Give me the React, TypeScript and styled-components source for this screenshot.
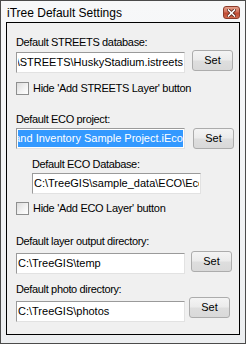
import React from "react";
import styled, { createGlobalStyle } from "styled-components";

const Global = createGlobalStyle`
  html, body { margin: 0; padding: 0; background: #ffffff; }
  body { font-family: "Liberation Sans", Arial, sans-serif; }
`;

const Window = styled.div`
  width: 246px;
  height: 344px;
  box-sizing: border-box;
  border: 1px solid #4b4b4b;
  padding: 0 5px 8px;
  background: linear-gradient(#f7f8f9, #eceef0);
  display: flex;
  flex-direction: column;
`;

const TitleBar = styled.div`
  height: 21px;
  box-sizing: border-box;
  padding: 5px 0 0 1px;
  display: flex;
  justify-content: space-between;
  align-items: flex-start;
`;

const Title = styled.div`
  font-size: 12px;
  line-height: 15px;
  color: #000;
`;

const CloseButton = styled.div`
  width: 17px;
  height: 13px;
  box-sizing: border-box;
  border: 1px solid #8c3b2a;
  border-radius: 3px;
  background: linear-gradient(#e4a08c 0%, #d2705a 45%, #c14a33 55%, #cf6a50 100%);
  display: flex;
  align-items: center;
  justify-content: center;
`;

const Client = styled.div`
  flex: 1;
  box-sizing: border-box;
  border: 1px solid #000;
  background: #f0f0f0;
  padding-left: 9px;
  display: flex;
  flex-direction: column;
`;

const Label = styled.div<{ $top: number; $indent?: number }>`
  margin-top: ${(p) => p.$top}px;
  margin-left: ${(p) => p.$indent ?? 0}px;
  font-size: 11px;
  line-height: 13px;
  letter-spacing: -0.35px;
  color: #000;
  white-space: nowrap;
`;

const FieldRow = styled.div<{ $top: number; $indent?: number }>`
  margin-top: ${(p) => p.$top}px;
  margin-left: ${(p) => p.$indent ?? 0}px;
  display: flex;
  align-items: flex-start;
`;

const TextBox = styled.div<{ $offset?: number }>`
  margin-top: ${(p) => p.$offset ?? 0}px;
  width: 169px;
  height: 21px;
  box-sizing: border-box;
  border: 1px solid;
  border-color: #9a9a9a #e2e2e2 #e2e2e2 #9a9a9a;
  background: #fff;
  padding: 1px;
  overflow: hidden;
`;

const TextValue = styled.div<{ $end?: boolean; $selected?: boolean }>`
  height: 17px;
  display: flex;
  justify-content: ${(p) => (p.$end ? "flex-end" : "flex-start")};
  overflow: hidden;
  white-space: nowrap;
  font-size: 11px;
  line-height: 17px;
  color: ${(p) => (p.$selected ? "#fff" : "#000")};
  background: ${(p) => (p.$selected ? "#3399ff" : "transparent")};
`;

const SetButton = styled.button<{ $left: number }>`
  margin-left: ${(p) => p.$left}px;
  width: 41px;
  height: 21px;
  box-sizing: border-box;
  padding: 0;
  border: 1px solid #acacac;
  border-radius: 3px;
  background: linear-gradient(#f4f4f4 0%, #ebebeb 48%, #dedede 52%, #d9d9d9 100%);
  font-family: "Liberation Sans", Arial, sans-serif;
  font-size: 11px;
  line-height: 19px;
  color: #000;
`;

const CheckRow = styled.div<{ $top: number }>`
  margin-top: ${(p) => p.$top}px;
  display: flex;
  align-items: flex-start;
  gap: 4px;
`;

const CheckBox = styled.div`
  width: 13px;
  height: 13px;
  box-sizing: border-box;
  border: 1px solid #8e8f8f;
  background: linear-gradient(135deg, #dcdcdc 0%, #f4f4f4 60%, #ffffff 100%);
`;

const CheckText = styled.div`
  font-size: 11px;
  line-height: 13px;
  letter-spacing: -0.3px;
  color: #000;
  white-space: nowrap;
`;

export default function App() {
  return (
    <>
      <Global />
      <Window>
        <TitleBar>
          <Title>iTree Default Settings</Title>
          <CloseButton>
            <svg width="9" height="8" viewBox="0 0 9 8">
              <path d="M1.5 1 L7.5 7 M7.5 1 L1.5 7" stroke="#5a2418" strokeWidth="3.2" strokeLinecap="square" />
              <path d="M1.5 1 L7.5 7 M7.5 1 L1.5 7" stroke="#ffffff" strokeWidth="1.6" strokeLinecap="square" />
            </svg>
          </CloseButton>
        </TitleBar>
        <Client>
          <Label $top={13}>Default STREETS database:</Label>
          <FieldRow $top={1}>
            <TextBox $offset={2}>
              <TextValue $end>C:\TreeGIS\sample_data\STREETS\HuskyStadium.istreets</TextValue>
            </TextBox>
            <SetButton $left={7}>Set</SetButton>
          </FieldRow>
          <CheckRow $top={9}>
            <CheckBox />
            <CheckText>Hide 'Add STREETS Layer' button</CheckText>
          </CheckRow>

          <Label $top={18}>Default ECO project:</Label>
          <FieldRow $top={2}>
            <TextBox>
              <TextValue $end $selected>and Inventory Sample Project.iEco</TextValue>
            </TextBox>
            <SetButton $left={8}>Set</SetButton>
          </FieldRow>
          <Label $top={9} $indent={16}>Default ECO Database:</Label>
          <FieldRow $top={2} $indent={16}>
            <TextBox>
              <TextValue>C:\TreeGIS\sample_data\ECO\Eco</TextValue>
            </TextBox>
          </FieldRow>
          <CheckRow $top={8}>
            <CheckBox />
            <CheckText>Hide 'Add ECO Layer' button</CheckText>
          </CheckRow>

          <Label $top={20}>Default layer output directory:</Label>
          <FieldRow $top={3}>
            <TextBox $offset={2}>
              <TextValue>C:\TreeGIS\temp</TextValue>
            </TextBox>
            <SetButton $left={6}>Set</SetButton>
          </FieldRow>

          <Label $top={9}>Default photo directory:</Label>
          <FieldRow $top={1}>
            <TextBox $offset={4}>
              <TextValue>C:\TreeGIS\photos</TextValue>
            </TextBox>
            <SetButton $left={4}>Set</SetButton>
          </FieldRow>
        </Client>
      </Window>
    </>
  );
}
